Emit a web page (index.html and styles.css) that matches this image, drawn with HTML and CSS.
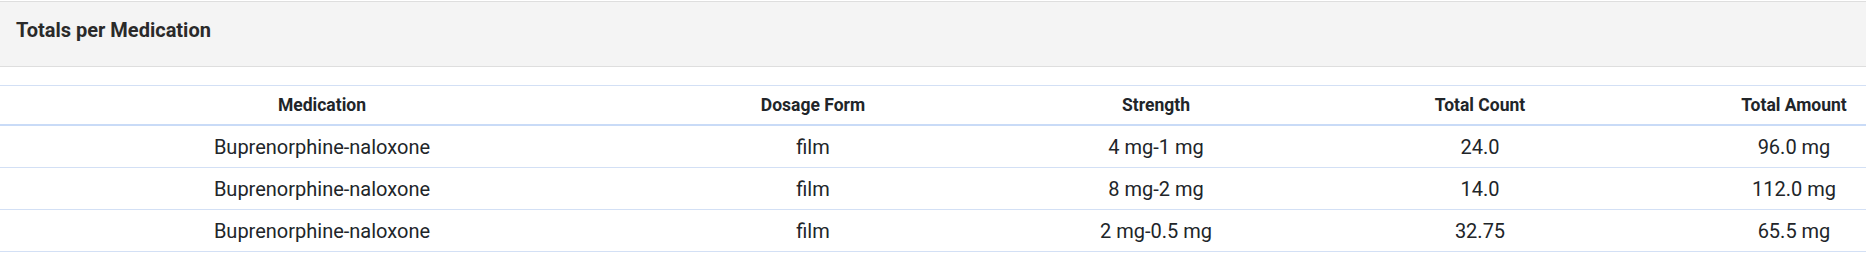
FILE: index.html
```html
<!DOCTYPE html>
<html>
<head>
<meta charset="utf-8">
<link rel="stylesheet" href="styles.css">
</head>
<body>
<div class="card">
  <div class="card-header">Totals per Medication</div>
  <div class="card-body">
    <table class="totals">
      <colgroup>
        <col class="c1"><col class="c2"><col class="c3"><col class="c4"><col class="c5">
      </colgroup>
      <thead>
        <tr><th>Medication</th><th>Dosage Form</th><th>Strength</th><th>Total Count</th><th class="last">Total Amount</th></tr>
      </thead>
      <tbody>
        <tr><td>Buprenorphine-naloxone</td><td>film</td><td>4 mg-1 mg</td><td>24.0</td><td class="last">96.0 mg</td></tr>
        <tr><td>Buprenorphine-naloxone</td><td>film</td><td>8 mg-2 mg</td><td>14.0</td><td class="last">112.0 mg</td></tr>
        <tr><td>Buprenorphine-naloxone</td><td>film</td><td>2 mg-0.5 mg</td><td>32.75</td><td class="last">65.5 mg</td></tr>
      </tbody>
    </table>
  </div>
</div>
</body>
</html>
```
FILE: styles.css
```css
html, body {
  margin: 0;
  padding: 0;
  background: #fff;
  overflow: hidden;
}
body {
  font-family: Roboto, "Liberation Sans", sans-serif;
  color: #212529;
}
.card {
  margin-top: 1px;
  border-top: 1px solid #dedede;
}
.card-header {
  height: 47px;
  padding: 17px 0 0 16px;
  background: #f4f4f4;
  border-bottom: 1px solid #dedede;
  font-size: 20px;
  line-height: 23px;
  font-weight: 700;
  color: #2a2a2a;
}
.card-body {
  padding-top: 18px;
}
.totals {
  width: 1866px;
  border-collapse: collapse;
  table-layout: fixed;
}
.c1 { width: 644px; }
.c2 { width: 338px; }
.c3 { width: 348px; }
.c4 { width: 300px; }
.c5 { width: 236px; }
.totals th, .totals td {
  text-align: center;
  padding: 0;
}
.totals th.last, .totals td.last {
  padding-left: 92px;
}
.totals thead tr {
  border-top: 1px solid #d3e0f5;
  border-bottom: 2px solid #c9dbf7;
}
.totals th {
  height: 38px;
  font-size: 17.5px;
  font-weight: 700;
}
.totals td {
  height: 41px;
  font-size: 20px;
  font-weight: 400;
}
.totals tbody tr {
  border-bottom: 1px solid #d3e0f5;
}
```
